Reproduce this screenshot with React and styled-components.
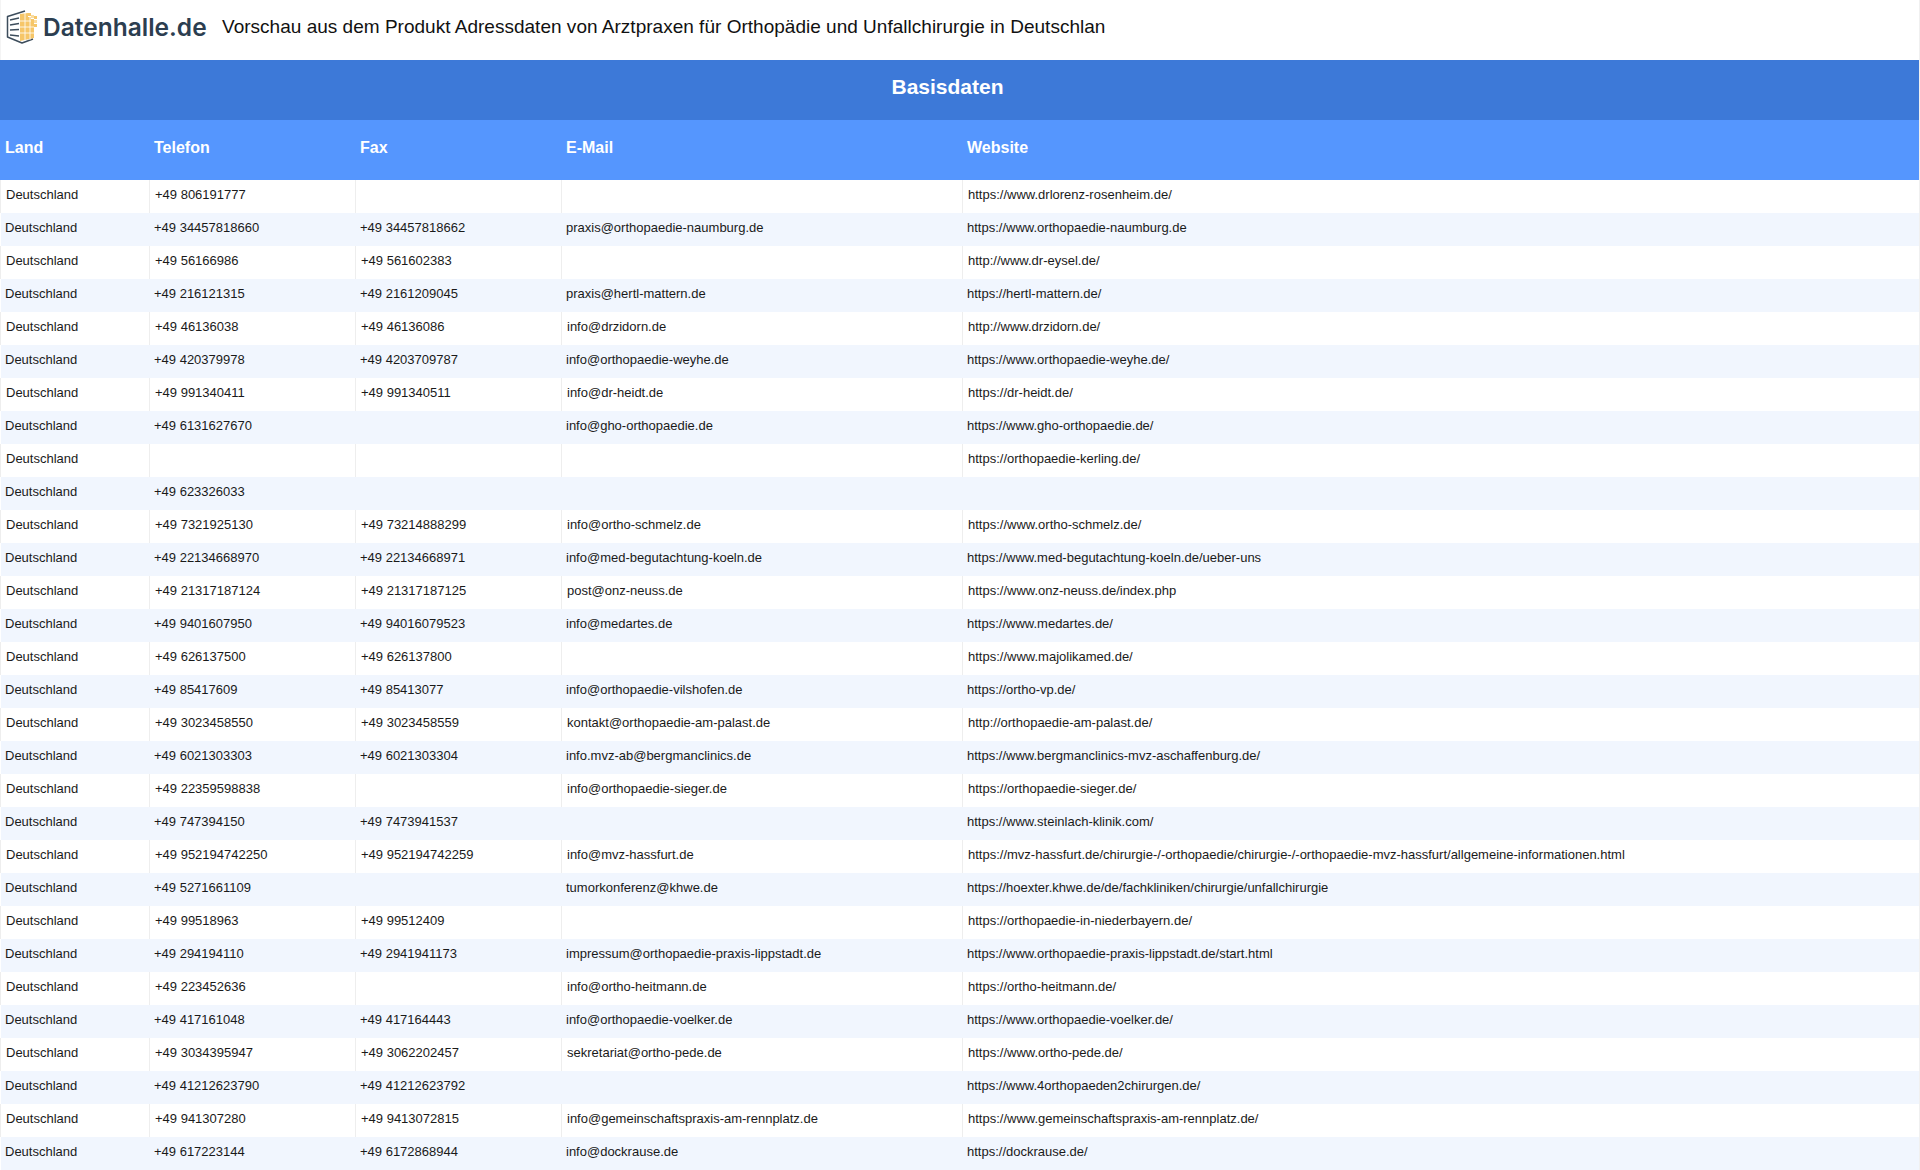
import React from "react";
import styled, { createGlobalStyle } from "styled-components";

const GlobalStyle = createGlobalStyle`
  html, body {
    margin: 0;
    padding: 0;
    background: #fff;
    overflow: hidden;
  }
`;

const Page = styled.div`
  width: 1919px;
  height: 1170px;
  overflow: hidden;
  border-right: 1px solid #f0f0f0;
  font-family: "Liberation Sans", Arial, sans-serif;
`;

const TopBar = styled.header`
  height: 60px;
  display: flex;
  align-items: flex-start;
  white-space: nowrap;
  border-left: 1px solid #f4f4f4;
`;

const Brand = styled.div`
  width: 221px;
  height: 60px;
  flex: none;
  display: flex;
  align-items: center;
  gap: 5px;
  padding: 0 0 6px 5px;
  box-sizing: border-box;
`;

const BrandName = styled.span`
  font-family: Inter, "Open Sans", sans-serif;
  font-size: 24.5px;
  font-weight: 600;
  color: #2c3e50;
`;

const Title = styled.h1`
  margin: 0;
  padding-top: 16px;
  font-size: 19px;
  line-height: 22px;
  font-weight: 400;
  letter-spacing: 0.015px;
  color: #111;
`;

const Table = styled.table`
  width: 1919px;
  table-layout: fixed;
  border-collapse: separate;
  border-spacing: 0;
`;

const Banner = styled.th`
  height: 60px;
  box-sizing: border-box;
  padding: 0 24px 6px 0;
  background: #3d79d8;
  color: #fff;
  font-size: 21px;
  font-weight: 700;
  text-align: center;
`;

const HeadCell = styled.th`
  height: 60px;
  box-sizing: border-box;
  padding: 0 5px 4px;
  background: #5596fe;
  color: #fff;
  font-size: 16px;
  font-weight: 700;
  text-align: left;
`;

const Row = styled.tr`
  background: ${(p) => (p.$striped ? "#f1f6fe" : "#fff")};
`;

const Cell = styled.td`
  height: 33px;
  box-sizing: border-box;
  padding: 7px 5px 0;
  vertical-align: top;
  font-size: 13px;
  line-height: 15px;
  color: #1a1a1a;
  white-space: nowrap;
  border-left: ${(p) => (p.$striped ? "none" : "1px solid #eeeeee")};

  &:first-child {
    box-shadow: ${(p) => (p.$striped ? "inset 1px 0 #fff" : "none")};
  }
`;

const columns = [
  { label: "Land", width: 149 },
  { label: "Telefon", width: 206 },
  { label: "Fax", width: 206 },
  { label: "E-Mail", width: 401 },
  { label: "Website", width: 957 },
];

const rows = [
  ["+49 806191777", "", "", "https://www.drlorenz-rosenheim.de/"],
  ["+49 34457818660", "+49 34457818662", "praxis@orthopaedie-naumburg.de", "https://www.orthopaedie-naumburg.de"],
  ["+49 56166986", "+49 561602383", "", "http://www.dr-eysel.de/"],
  ["+49 216121315", "+49 2161209045", "praxis@hertl-mattern.de", "https://hertl-mattern.de/"],
  ["+49 46136038", "+49 46136086", "info@drzidorn.de", "http://www.drzidorn.de/"],
  ["+49 420379978", "+49 4203709787", "info@orthopaedie-weyhe.de", "https://www.orthopaedie-weyhe.de/"],
  ["+49 991340411", "+49 991340511", "info@dr-heidt.de", "https://dr-heidt.de/"],
  ["+49 6131627670", "", "info@gho-orthopaedie.de", "https://www.gho-orthopaedie.de/"],
  ["", "", "", "https://orthopaedie-kerling.de/"],
  ["+49 623326033", "", "", ""],
  ["+49 7321925130", "+49 73214888299", "info@ortho-schmelz.de", "https://www.ortho-schmelz.de/"],
  ["+49 22134668970", "+49 22134668971", "info@med-begutachtung-koeln.de", "https://www.med-begutachtung-koeln.de/ueber-uns"],
  ["+49 21317187124", "+49 21317187125", "post@onz-neuss.de", "https://www.onz-neuss.de/index.php"],
  ["+49 9401607950", "+49 94016079523", "info@medartes.de", "https://www.medartes.de/"],
  ["+49 626137500", "+49 626137800", "", "https://www.majolikamed.de/"],
  ["+49 85417609", "+49 85413077", "info@orthopaedie-vilshofen.de", "https://ortho-vp.de/"],
  ["+49 3023458550", "+49 3023458559", "kontakt@orthopaedie-am-palast.de", "http://orthopaedie-am-palast.de/"],
  ["+49 6021303303", "+49 6021303304", "info.mvz-ab@bergmanclinics.de", "https://www.bergmanclinics-mvz-aschaffenburg.de/"],
  ["+49 22359598838", "", "info@orthopaedie-sieger.de", "https://orthopaedie-sieger.de/"],
  ["+49 747394150", "+49 7473941537", "", "https://www.steinlach-klinik.com/"],
  ["+49 952194742250", "+49 952194742259", "info@mvz-hassfurt.de", "https://mvz-hassfurt.de/chirurgie-/-orthopaedie/chirurgie-/-orthopaedie-mvz-hassfurt/allgemeine-informationen.html"],
  ["+49 5271661109", "", "tumorkonferenz@khwe.de", "https://hoexter.khwe.de/de/fachkliniken/chirurgie/unfallchirurgie"],
  ["+49 99518963", "+49 99512409", "", "https://orthopaedie-in-niederbayern.de/"],
  ["+49 294194110", "+49 2941941173", "impressum@orthopaedie-praxis-lippstadt.de", "https://www.orthopaedie-praxis-lippstadt.de/start.html"],
  ["+49 223452636", "", "info@ortho-heitmann.de", "https://ortho-heitmann.de/"],
  ["+49 417161048", "+49 417164443", "info@orthopaedie-voelker.de", "https://www.orthopaedie-voelker.de/"],
  ["+49 3034395947", "+49 3062202457", "sekretariat@ortho-pede.de", "https://www.ortho-pede.de/"],
  ["+49 41212623790", "+49 41212623792", "", "https://www.4orthopaeden2chirurgen.de/"],
  ["+49 941307280", "+49 9413072815", "info@gemeinschaftspraxis-am-rennplatz.de", "https://www.gemeinschaftspraxis-am-rennplatz.de/"],
  ["+49 617223144", "+49 6172868944", "info@dockrause.de", "https://dockrause.de/"],
];

// kleine Quadrate rechts oben im Logo
const pixels = [
  [22, 3, "#f6c668"], [25, 5, "#f9dca0"], [28, 6, "#f6c668"], [25, 9, "#f6c668"],
  [28, 10, "#f9dca0"], [28, 14, "#f6c668"],
];

const Logo = () => (
  <svg width="32" height="34" viewBox="0 0 32 34" fill="none">
    <path d="M19 1 L1.5 6.5 V27 L16 33 L27 29" stroke="#3d4d5c" strokeWidth="1.5" strokeLinejoin="round" />
    <g stroke="#3d4d5c" strokeWidth="1.4">
      <path d="M4 10 L13 8" />
      <path d="M4 15 L13 13.5" />
      <path d="M4 20 L13 19.5" />
      <path d="M4 25 L13 26" />
    </g>
    <path d="M14 4 L22 3 V7 H25 V12 H28 V28 L14 31 Z" fill="#f6c668" />
    <g stroke="#fff" strokeWidth="0.8">
      <path d="M14 11 H28 M14 17 H28 M14 23 H28 M19 3 V31 M24 7 V30" />
    </g>
    {pixels.map(([x, y, c]) => (
      <rect key={`${x}-${y}`} x={x} y={y} width="3" height="3" fill={c} />
    ))}
  </svg>
);

const App = () => (
  <>
    <GlobalStyle />
    <Page>
      <TopBar>
        <Brand>
          <Logo />
          <BrandName>Datenhalle.de</BrandName>
        </Brand>
        <Title>Vorschau aus dem Produkt Adressdaten von Arztpraxen für Orthopädie und Unfallchirurgie in Deutschlan</Title>
      </TopBar>
      <Table>
        <colgroup>
          {columns.map((c) => (
            <col key={c.label} width={c.width} />
          ))}
        </colgroup>
        <thead>
          <tr>
            <Banner colSpan={5}>Basisdaten</Banner>
          </tr>
          <tr>
            {columns.map((c) => (
              <HeadCell key={c.label}>{c.label}</HeadCell>
            ))}
          </tr>
        </thead>
        <tbody>
          {rows.map((r, i) => (
            <Row key={i} $striped={i % 2 === 1}>
              {["Deutschland", ...r].map((v, j) => (
                <Cell key={j} $striped={i % 2 === 1}>{v}</Cell>
              ))}
            </Row>
          ))}
        </tbody>
      </Table>
    </Page>
  </>
);

export default App;
